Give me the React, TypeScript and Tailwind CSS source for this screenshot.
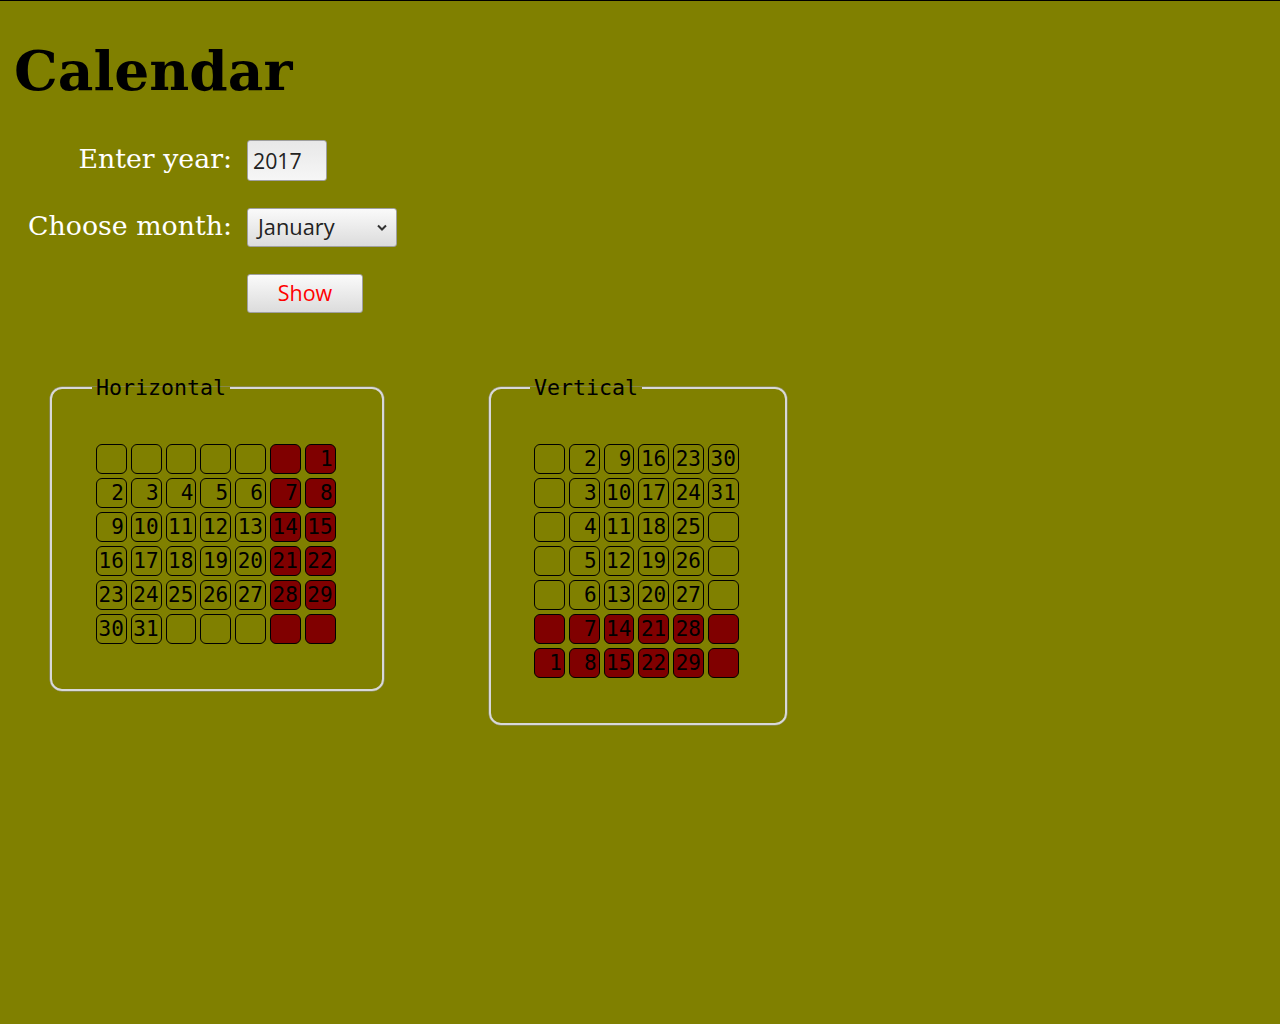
import React from "react";

const weeks = 6;

function dayAt(week: number, wd: number): number | null {
  const d = week * 7 + wd - 5;
  return d >= 1 && d <= 31 ? d : null;
}

function Cell({ d, red }: { d: number | null; red: boolean }) {
  return (
    <div
      className={
        "w-[30.8px] h-[30px] border border-black rounded-[6px] text-right pr-[2px] leading-[28px] text-[21px] text-black font-['DejaVu_Sans_Mono',monospace] " +
        (red ? "bg-[#800000]" : "")
      }
    >
      {d ?? ""}
    </div>
  );
}

export default function App() {
  const hCells: React.ReactNode[] = [];
  for (let w = 0; w < weeks; w++) {
    for (let wd = 0; wd < 7; wd++) {
      hCells.push(<Cell key={`h${w}-${wd}`} d={dayAt(w, wd)} red={wd >= 5} />);
    }
  }
  const vCells: React.ReactNode[] = [];
  for (let wd = 0; wd < 7; wd++) {
    for (let w = 0; w < weeks; w++) {
      vCells.push(<Cell key={`v${wd}-${w}`} d={dayAt(w, wd)} red={wd >= 5} />);
    }
  }

  return (
    <div className="min-h-[1024px] bg-[#808000] border-t border-black">
      <h1 className="pl-[14px] pt-[38px] text-[55px] font-bold leading-[64px] text-black font-['DejaVu_Serif',serif]">
        Calendar
      </h1>
      <div className="grid grid-cols-[232px_auto] gap-x-[15px] gap-y-[27px] mt-[37px] items-center">
        <label className="text-right text-white text-[26.8px] leading-[32px] pb-[3px] font-['DejaVu_Serif',serif]">
          Enter year:
        </label>
        <input
          defaultValue="2017"
          className="block w-[80px] h-[41px] border border-[#a0a0a0] rounded-[3px] bg-gradient-to-b from-[#e8e8e8] to-[#f6f6f6] pl-[5px] text-[21.3px] text-[#222] font-['Open_Sans',sans-serif]"
        />
        <label className="text-right text-white text-[26.8px] leading-[32px] pb-[3px] font-['DejaVu_Serif',serif]">
          Choose month:
        </label>
        <div className="relative w-[150px] h-[39px] border border-[#a0a0a0] rounded-[3px] bg-gradient-to-b from-[#fafafa] to-[#dcdcdc] pl-[10px] text-[21.8px] text-[#222] leading-[36px] font-['Open_Sans',sans-serif]">
          January
          <svg className="absolute right-[9px] top-[15px]" width="10" height="7" viewBox="0 0 10 7">
            <path d="M1 1.5 L5 5.5 L9 1.5" stroke="#333" strokeWidth="2" fill="none" />
          </svg>
        </div>
        <div />
        <button className="block w-[116px] h-[39px] border border-[#a0a0a0] rounded-[3px] bg-gradient-to-b from-[#fafafa] to-[#dcdcdc] text-[21.5px] text-[#ff0000] font-['Open_Sans',sans-serif]">
          Show
        </button>
      </div>
      <div className="flex items-start gap-[105px] pl-[50px] mt-[62px]">
        <fieldset className="w-[334px] border-2 border-[#d8d8d8] rounded-[12px] px-[40px] pt-[44px] pb-[45px] shadow-[0_0_0_0.5px_#909090]">
          <legend className="px-[4px] text-[21.6px] leading-[25px] text-black font-['DejaVu_Sans_Mono',monospace]">
            Horizontal
          </legend>
          <div className="ml-[4px] grid grid-cols-[repeat(7,30.8px)] gap-[4px]">{hCells}</div>
        </fieldset>
        <fieldset className="w-[298px] border-2 border-[#d8d8d8] rounded-[12px] pl-[39px] pr-[40px] pt-[44px] pb-[45px] shadow-[0_0_0_0.5px_#909090]">
          <legend className="px-[4px] text-[21.6px] leading-[25px] text-black font-['DejaVu_Sans_Mono',monospace]">
            Vertical
          </legend>
          <div className="ml-[4px] grid grid-cols-[repeat(6,30.8px)] gap-[4px]">{vCells}</div>
        </fieldset>
      </div>
    </div>
  );
}
